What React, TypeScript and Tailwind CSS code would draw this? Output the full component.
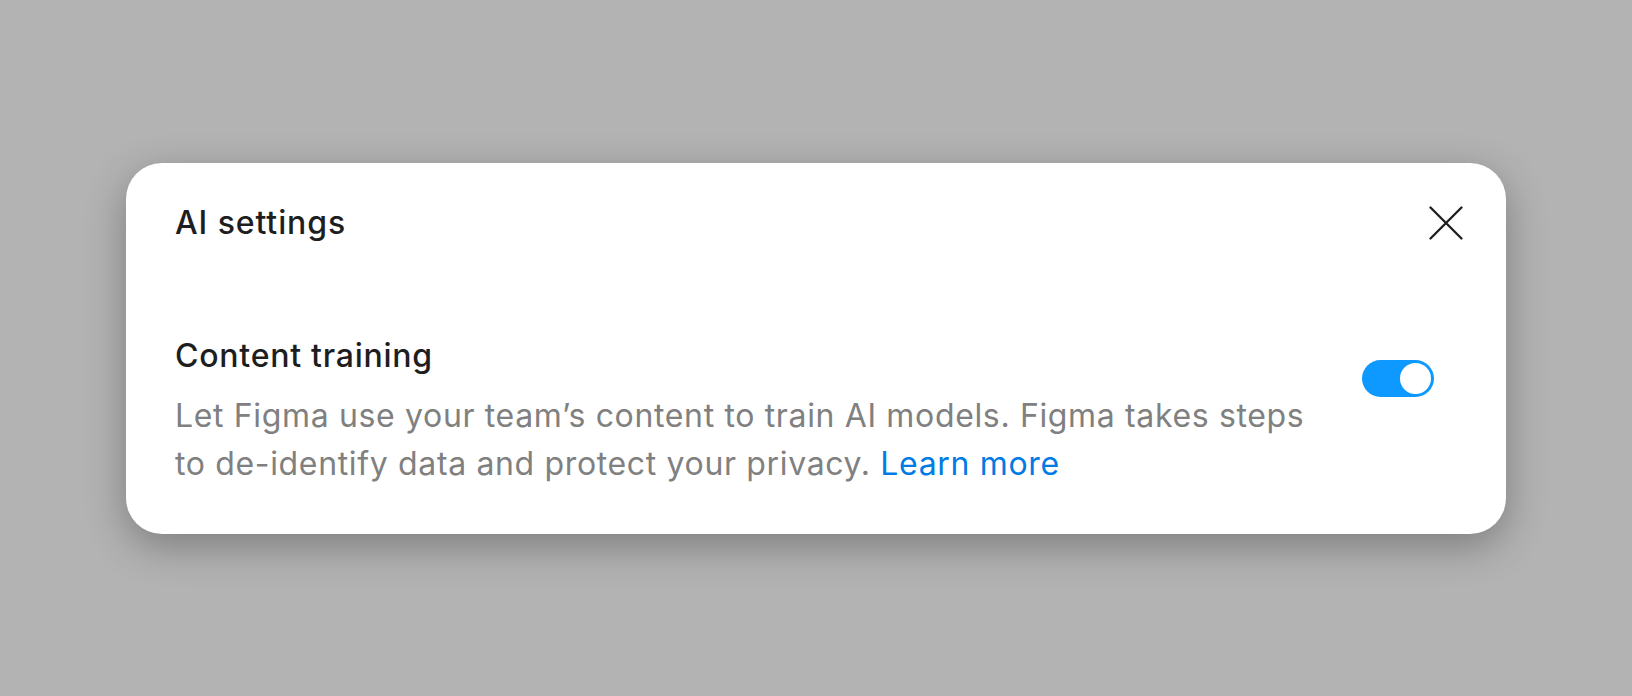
const CloseIcon = () => (
  <svg width="34" height="34" viewBox="0 0 34 34" fill="none">
    <path
      d="M1.5 1.5L32.5 32.5M32.5 1.5L1.5 32.5"
      stroke="#1e1e1e"
      strokeWidth="2.3"
      strokeLinecap="round"
    />
  </svg>
);

const Toggle = ({ on }: { on: boolean }) => (
  <button
    className={`w-[72px] h-[37px] rounded-full flex items-center px-[3px] ${
      on ? "bg-[#0d99ff] justify-end" : "bg-[#d9d9d9] justify-start"
    }`}
  >
    <span className="block w-[31px] h-[31px] rounded-full bg-white" />
  </button>
);

export default function App() {
  return (
    <div
      className="w-full h-[696px] bg-[#b3b3b3] flex items-center justify-center"
      style={{ fontFamily: "Inter, 'Noto Sans', sans-serif" }}
    >
      <div className="w-[1380px] bg-white rounded-[36px] pt-[36px] pb-[46px] pl-[49px] pr-[43px] shadow-[0_12px_40px_rgba(0,0,0,0.3)]">
        <div className="h-12 flex items-center justify-between">
          <h2 className="text-[32px] leading-[36px] tracking-[0.9px] font-medium text-[#1e1e1e]">
            AI settings
          </h2>
          <button className="w-[34px] h-[34px] flex items-center justify-center">
            <CloseIcon />
          </button>
        </div>

        <div className="mt-[91px] flex items-start justify-between pr-[29px]">
          <div className="w-[1130px]">
            <h3 className="text-[32px] leading-[36px] tracking-[0.75px] font-medium text-[#1e1e1e]">
              Content training
            </h3>
            <p className="mt-[18px] text-[32px] leading-[48px] tracking-[0.65px] text-[#808080]">
              Let Figma use your team’s content to train AI models. Figma takes steps to
              de-identify data and protect your privacy.{" "}
              <a href="#" className="text-[#007be5]">
                Learn more
              </a>
            </p>
          </div>
          <div className="mt-[22px]">
            <Toggle on />
          </div>
        </div>
      </div>
    </div>
  );
}
